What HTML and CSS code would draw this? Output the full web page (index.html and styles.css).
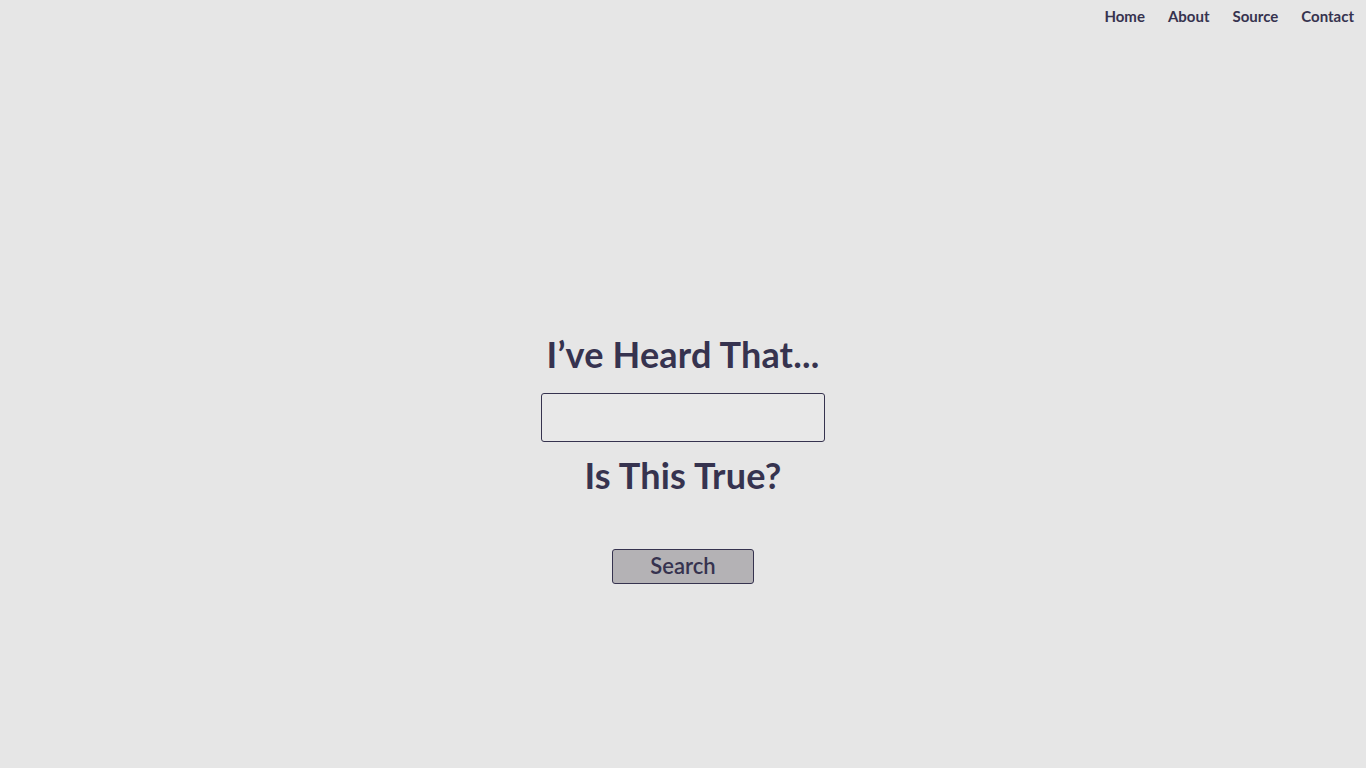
FILE: index.html
```html
<!DOCTYPE html>
<html lang="en">
<head>
<meta charset="utf-8">
<title>I've Heard That...</title>
<link rel="stylesheet" href="styles.css">
</head>
<body>
<header class="topbar">
  <nav class="nav">
    <a class="nav-link" href="#">Home</a>
    <a class="nav-link" href="#">About</a>
    <a class="nav-link" href="#">Source</a>
    <a class="nav-link" href="#">Contact</a>
  </nav>
</header>
<main class="main">
  <form class="search-form">
    <h1 class="title">I’ve Heard That...</h1>
    <input class="claim-input" type="text" aria-label="claim">
    <h2 class="title second">Is This True?</h2>
    <button class="search-btn" type="button">Search</button>
  </form>
</main>
</body>
</html>
```
FILE: styles.css
```css
html, body {
  margin: 0;
  padding: 0;
  background: #e6e6e6;
  color: #36334f;
  font-family: "Lato", "Open Sans", sans-serif;
}
.topbar {
  display: flex;
  justify-content: flex-end;
  height: 34px;
}
.nav {
  display: flex;
  gap: 23px;
  padding: 7px 12px 0 0;
}
.nav-link {
  color: #36334f;
  text-decoration: none;
  font-size: 15px;
  font-weight: 700;
  line-height: 18px;
}
.main {
  display: flex;
  justify-content: center;
  padding-top: 298px;
}
.search-form {
  display: flex;
  flex-direction: column;
  align-items: center;
}
.title {
  margin: 0;
  font-size: 36px;
  font-weight: 700;
  line-height: 44px;
  letter-spacing: 0.2px;
}
.claim-input {
  box-sizing: border-box;
  width: 284px;
  height: 49px;
  margin-top: 17px;
  border: 1.5px solid #36334f;
  border-radius: 3px;
  background: #e8e8e8;
  font-size: 18px;
}
.second {
  margin-top: 11px;
}
.search-btn {
  box-sizing: border-box;
  width: 142px;
  height: 35px;
  margin-top: 52px;
  border: 1.5px solid #36334f;
  border-radius: 3px;
  background: #b4b2b5;
  color: #36334f;
  font-family: "Lato", sans-serif;
  font-size: 22px;
  line-height: 30px;
  font-weight: 600;
  padding: 0 0 2px;
}
```
